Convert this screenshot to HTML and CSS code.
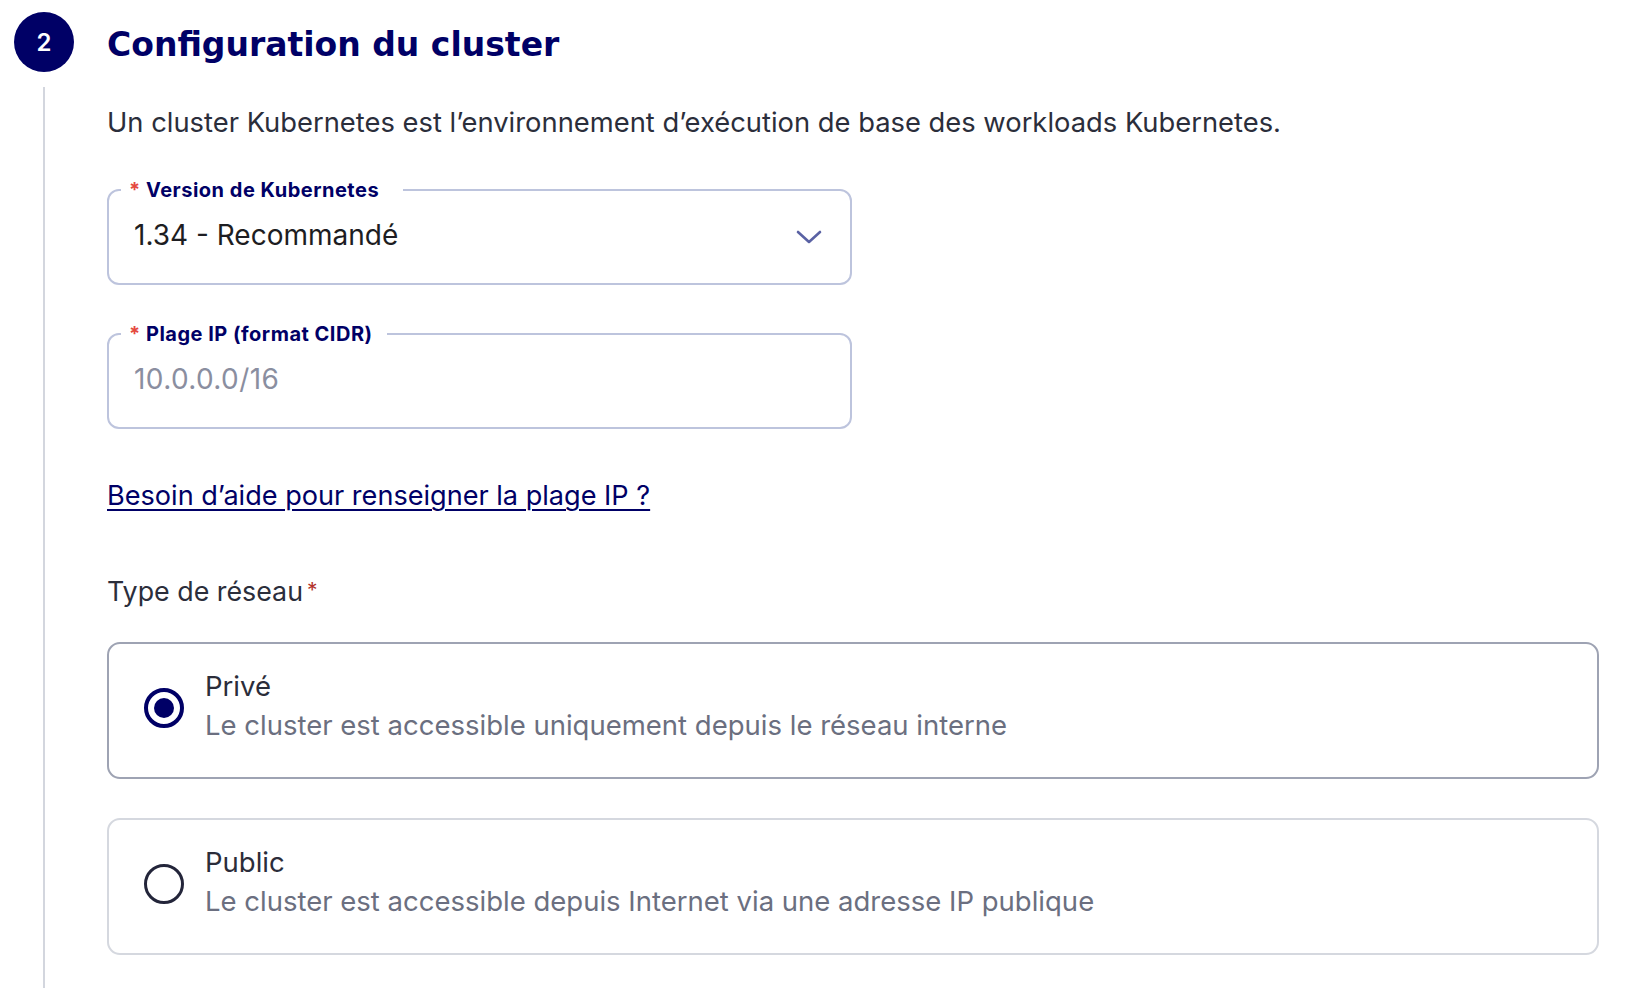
FILE: index.html
```html
<!DOCTYPE html>
<html lang="fr">
<head>
    <meta charset="UTF-8">
    <meta name="viewport" content="width=device-width, initial-scale=1.0">
    <title>Configuration du cluster</title>
    <link rel="stylesheet" href="styles.css">
</head>
<body>
    <section class="step">
        <header class="step-head">
            <span class="step-num">2</span>
            <h2 class="step-title">Configuration du cluster</h2>
        </header>

        <div class="step-body">
            <p class="intro">Un cluster Kubernetes est l’environnement d’exécution de base des workloads Kubernetes.</p>

            <fieldset class="field field-select">
                <legend class="field-label"><span class="req">*</span> Version de Kubernetes</legend>
                <div class="field-row">
                    <span class="field-value">1.34 - Recommandé</span>
                    <svg class="chevron" width="26" height="14" viewBox="0 0 26 14">
                        <path d="M2 2 L13 12 L24 2" fill="none" stroke="#5a62a4" stroke-width="2.6" stroke-linecap="round" stroke-linejoin="round"/>
                    </svg>
                </div>
            </fieldset>

            <fieldset class="field field-input">
                <legend class="field-label label-short"><span class="req">*</span> Plage IP (format CIDR)</legend>
                <div class="field-row">
                    <span class="field-value placeholder">10.0.0.0/16</span>
                </div>
            </fieldset>

            <p class="help"><a href="#" class="help-link">Besoin d’aide pour renseigner la plage IP ?</a></p>

            <p class="net-label">Type de réseau<span class="req">*</span></p>

            <div class="options">
                <label class="option selected">
                    <span class="radio checked"></span>
                    <span class="option-text">
                        <span class="option-title">Privé</span>
                        <span class="option-desc">Le cluster est accessible uniquement depuis le réseau interne</span>
                    </span>
                </label>
                <label class="option">
                    <span class="radio"></span>
                    <span class="option-text">
                        <span class="option-title">Public</span>
                        <span class="option-desc">Le cluster est accessible depuis Internet via une adresse IP publique</span>
                    </span>
                </label>
            </div>
        </div>
    </section>
</body>
</html>
```

FILE: styles.css
```css
body {
    margin: 0;
    font-family: Inter, "Noto Sans", sans-serif;
    background-color: #ffffff;
    color: #2b2e3b;
}

.step-head {
    display: flex;
    align-items: center;
    gap: 33px;
    padding: 12px 0 0 14px;
}

.step-num {
    width: 60px;
    height: 60px;
    border-radius: 50%;
    background-color: #000066;
    color: #ffffff;
    display: flex;
    align-items: center;
    justify-content: center;
    font-size: 24px;
    font-weight: 600;
}

.step-title {
    margin: 0;
    padding-top: 4px;
    font-family: "DejaVu Sans", Inter, sans-serif;
    font-size: 33px;
    font-weight: 700;
    color: #000066;
    line-height: 1;
}

.step-body {
    margin: 15px 0 0 43px;
    border-left: 2px solid #d3d6de;
    padding: 18px 39px 40px 62px;
}

.intro {
    margin: 0;
    font-size: 27.35px;
    line-height: 36px;
}

.field {
    margin: 38px 0 0;
    width: 745px;
    min-width: 0;
    box-sizing: border-box;
    border: 2px solid #bdc4dd;
    border-radius: 12px;
    padding: 16px 28px 30px 25px;
}

.field-input {
    margin-top: 38px;
}

.field-label {
    margin-left: -13px;
    padding: 0 24px 0 8px;
    font-size: 20px;
    font-weight: 700;
    letter-spacing: 0.5px;
    line-height: 22px;
    color: #000066;
}

.label-short {
    padding-right: 14px;
}

.req {
    color: #e5493f;
}

.field-row {
    display: flex;
    align-items: center;
    justify-content: space-between;
}

.field-value {
    font-size: 28px;
    line-height: 36px;
    color: #1d1d22;
}

.placeholder {
    color: #8a8ea0;
    letter-spacing: 0.4px;
}

.chevron {
    margin-top: 4px;
}

.help {
    margin: 49px 0 0;
    font-size: 27.1px;
    line-height: 36px;
}

.help-link {
    color: #000066;
    text-decoration: underline;
    text-decoration-thickness: 2px;
    text-underline-offset: 4px;
}

.net-label {
    margin: 59px 0 0;
    font-size: 26.8px;
    line-height: 36px;
    color: #2b2e3b;
}

.net-label .req {
    color: #b3322b;
    margin-left: 4px;
    font-size: 21px;
    vertical-align: top;
}

.options {
    display: flex;
    flex-direction: column;
    gap: 39px;
    margin-top: 33px;
}

.option {
    display: flex;
    align-items: center;
    gap: 21px;
    border: 2px solid #d5d8df;
    border-radius: 13px;
    padding: 23px 35px 32px;
    cursor: pointer;
}

.option.selected {
    border-color: #9ea3b3;
}

.radio {
    flex: none;
    width: 40px;
    height: 40px;
    box-sizing: border-box;
    border-radius: 50%;
    border: 3px solid #23253a;
    margin-top: 4px;
}

.radio.checked {
    border: 4px solid #000066;
    padding: 6px;
}

.radio.checked::after {
    content: "";
    display: block;
    width: 20px;
    height: 20px;
    border-radius: 50%;
    background-color: #000066;
}

.option-text {
    display: flex;
    flex-direction: column;
}

.option-title {
    font-size: 27.5px;
    line-height: 39px;
    color: #2b2d3a;
}

.option-desc {
    font-size: 27.5px;
    line-height: 39px;
    color: #6b6f80;
}
```
